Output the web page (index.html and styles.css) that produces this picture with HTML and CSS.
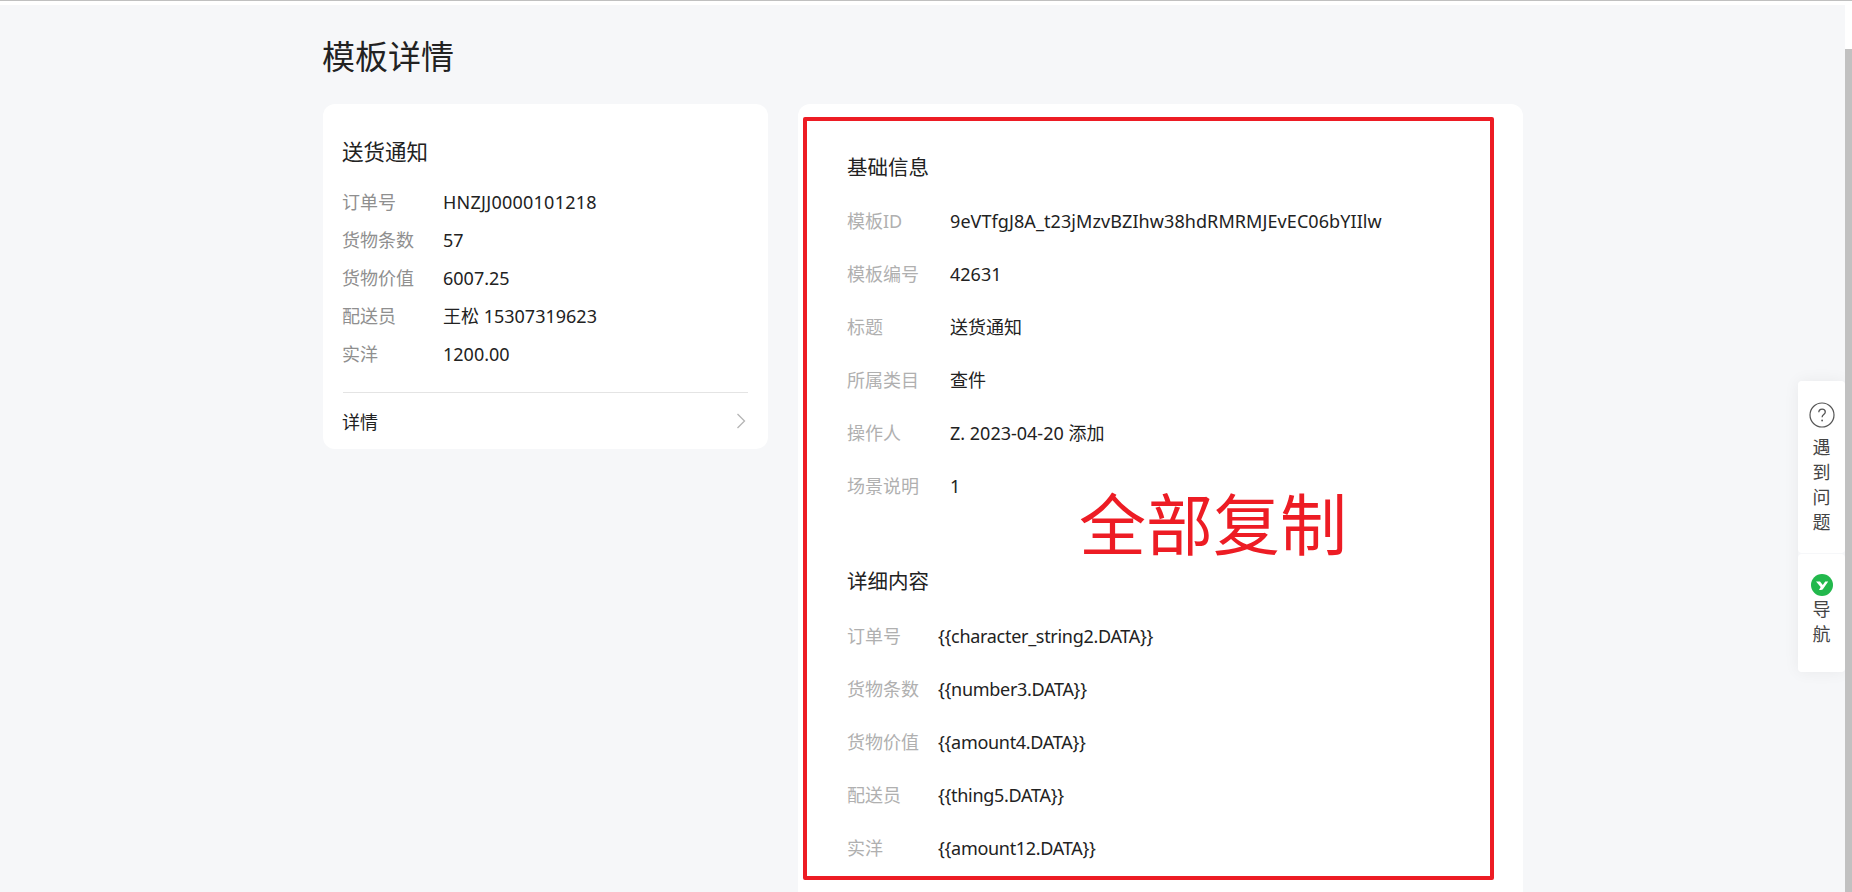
FILE: index.html
```html
<!DOCTYPE html>
<html lang="zh-CN">
<head>
<meta charset="utf-8">
<title>模板详情</title>
<link rel="stylesheet" href="styles.css">
</head>
<body>
<div class="topline"></div>
<div class="shell">
  <main class="page">
    <h1 class="title">模板详情</h1>
    <div class="columns">
      <section class="preview">
        <h2 class="preview-name">送货通知</h2>
        <dl class="preview-list">
          <div class="preview-row"><dt>订单号</dt><dd class="code-wide">HNZJJ0000101218</dd></div>
          <div class="preview-row"><dt>货物条数</dt><dd>57</dd></div>
          <div class="preview-row"><dt>货物价值</dt><dd>6007.25</dd></div>
          <div class="preview-row"><dt>配送员</dt><dd>王松 15307319623</dd></div>
          <div class="preview-row"><dt>实洋</dt><dd>1200.00</dd></div>
        </dl>
        <div class="preview-link">
          <span class="preview-link-text">详情</span>
          <svg class="chevron" width="10" height="16" viewBox="0 0 10 16"><path d="M1.500 1 8.500 8l-7 7" fill="none" stroke="#b5b5b5" stroke-width="1.300"/></svg>
        </div>
      </section>
      <section class="detail">
        <h2 class="section-title">基础信息</h2>
        <dl class="info info-basic">
          <div class="info-row"><dt>模板ID</dt><dd class="template-id">9eVTfgJ8A_t23jMzvBZIhw38hdRMRMJEvEC06bYIIlw</dd></div>
          <div class="info-row"><dt>模板编号</dt><dd>42631</dd></div>
          <div class="info-row"><dt>标题</dt><dd>送货通知</dd></div>
          <div class="info-row"><dt>所属类目</dt><dd>查件</dd></div>
          <div class="info-row"><dt>操作人</dt><dd>Z. 2023-04-20 添加</dd></div>
          <div class="info-row"><dt>场景说明</dt><dd>1</dd></div>
        </dl>
        <h2 class="section-title section-gap">详细内容</h2>
        <dl class="info info-fields">
          <div class="info-row"><dt>订单号</dt><dd>{{character_string2.DATA}}</dd></div>
          <div class="info-row"><dt>货物条数</dt><dd>{{number3.DATA}}</dd></div>
          <div class="info-row"><dt>货物价值</dt><dd>{{amount4.DATA}}</dd></div>
          <div class="info-row"><dt>配送员</dt><dd>{{thing5.DATA}}</dd></div>
          <div class="info-row"><dt>实洋</dt><dd>{{amount12.DATA}}</dd></div>
        </dl>
        <div class="markup-frame"></div>
        <div class="markup-label">全部复制</div>
      </section>
    </div>
    <aside class="float-tools">
      <div class="tool tool-help">
        <svg width="26" height="26" viewBox="0 0 26 26"><circle cx="13" cy="13" r="12" fill="none" stroke="#555" stroke-width="1.200"/><path d="M9.800 10.300c0-2 1.500-3.200 3.300-3.200s3.200 1.200 3.200 2.900c0 2.500-3.200 2.600-3.200 5.200" fill="none" stroke="#555" stroke-width="1.300"/><circle cx="13.100" cy="18.500" r="0.900" fill="#555"/></svg>
        <span class="tool-text">遇到问题</span>
      </div>
      <div class="tool tool-nav">
        <svg width="22" height="22" viewBox="0 0 22 22"><circle cx="11" cy="11" r="11" fill="#22b84c"/><path d="M5 7.500h4l2.800 3.600 2.400-3.600h3l-5 7.200c-.7 1-1.600 1.300-3.200 1.300H8l1.700-3z" fill="#fff"/></svg>
        <span class="tool-text">导航</span>
      </div>
    </aside>
  </main>
  <div class="scrollbar"><div class="scrollbar-thumb"></div></div>
</div>
</body>
</html>
```
FILE: styles.css
```css
* { box-sizing: border-box; }
html, body { margin: 0; height: 100%; overflow: hidden; }
body {
  display: flex;
  flex-direction: column;
  background: #fff;
  color: #222;
  font-family: "Noto Sans", "Noto Sans CJK SC", sans-serif;
  font-size: 18px;
}
h1, h2, dl, dt, dd { margin: 0; font-weight: 400; }
.topline { height: 1px; background: #c0c0c0; flex: none; }
.shell { flex: 1; display: flex; min-height: 0; padding-top: 4px; }
.page {
  flex: 1;
  position: relative;
  min-width: 0;
  background: #f6f7f9;
  padding: 32px 0 0 323px;
  overflow: hidden;
}
.title { font-size: 33px; line-height: 40px; color: #222; height: 67px; margin-left: -1px; }
.columns { display: flex; align-items: flex-start; gap: 30px; }

.preview {
  width: 445px;
  height: 345px;
  flex: none;
  background: #fff;
  border-radius: 12px;
  padding: 34px 20px 0;
}
.preview-name { font-size: 21.500px; line-height: 28px; color: #222; margin: 0 0 17px -1px; }
.preview-row { display: flex; height: 38px; line-height: 38px; }
.preview-row dt { width: 101px; margin-left: -1px; color: #8f8f8f; }
.preview-row dd { color: #222; }
.code-wide { letter-spacing: 0.25px; }
.preview-list { border-bottom: 1px solid #e4e4e4; padding-bottom: 20px; height: 210px; }
.preview-link {
  display: flex;
  justify-content: space-between;
  align-items: center;
  height: 55px;
  color: #222;
  padding-right: 2px;
}
.preview-link-text { margin-left: -1px; }

.detail {
  position: relative;
  width: 725px;
  height: 800px;
  flex: none;
  background: #fff;
  border-radius: 12px;
  padding: 49px 0 0 49px;
}
.section-title { font-size: 20.500px; line-height: 28px; color: #222; }
.section-gap { margin-top: 54px; }
.info { margin-top: 14px; }
.info-row { display: flex; height: 53px; line-height: 53px; }
.info-row dt { color: #b0b0b0; }
.info-row dd { color: #222; }
.info-basic dt { width: 103px; }
.info-fields { margin-top: 15px; }
.info-fields dt { width: 91px; }
.info-fields dd { letter-spacing: -0.3px; }
.template-id { letter-spacing: 0.08px; }

.markup-frame {
  position: absolute;
  left: 5px;
  top: 13px;
  width: 691px;
  height: 763px;
  border: 4px solid #ed1c24;
  border-radius: 2px;
}
.markup-label {
  position: absolute;
  left: 281px;
  top: 373px;
  font-size: 67px;
  line-height: 94px;
  color: #ed1c24;
  white-space: nowrap;
}

.float-tools {
  position: absolute;
  top: 376px;
  right: 0;
  width: 47px;
  display: flex;
  flex-direction: column;
  gap: 1px;
  box-shadow: 0 0 16px rgba(0, 0, 0, 0.06);
  border-radius: 4px;
}
.tool {
  background: #fff;
  border-radius: 4px;
  display: flex;
  flex-direction: column;
  align-items: center;
}
.tool-help { height: 172px; padding-top: 21px; }
.tool-nav { height: 118px; padding-top: 20px; }
.tool-text {
  writing-mode: vertical-rl;
  text-orientation: upright;
  font-size: 18px;
  line-height: 24px;
  letter-spacing: 7px;
  color: #444;
  margin-top: 10px;
  margin-right: 2px;
}
.tool-nav .tool-text { margin-top: 4px; }

.scrollbar { width: 7px; flex: none; margin-top: -4px; padding-top: 48px; background: #fff; }
.scrollbar-thumb { height: 100%; background: #c1c1c1; }
```
